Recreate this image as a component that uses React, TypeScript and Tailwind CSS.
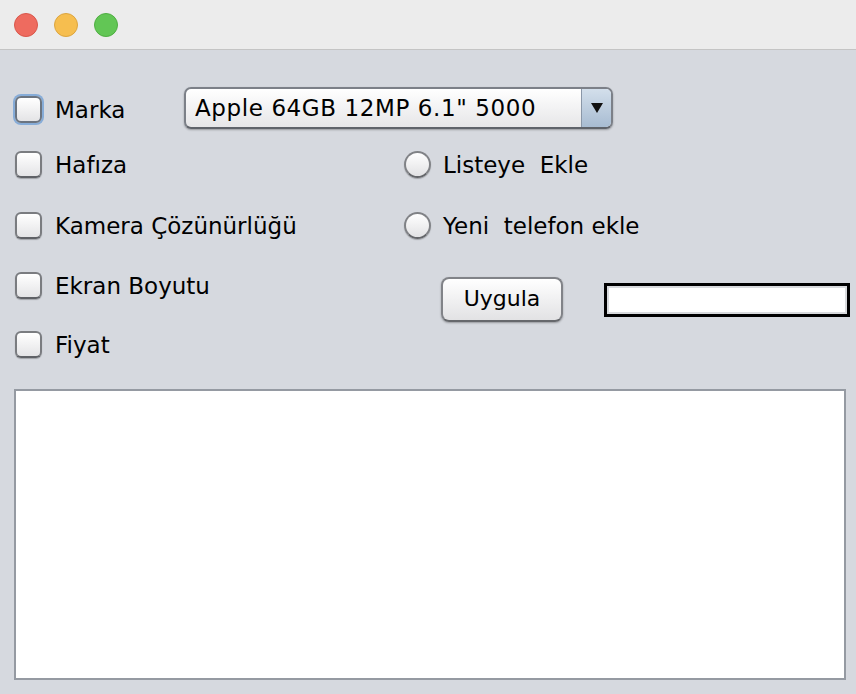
import React from "react";

const font = { fontFamily: '"DejaVu Sans", "Liberation Sans", sans-serif' };

function Check({ focused = false }: { focused?: boolean }) {
  return (
    <div className="w-[28px] h-[28px] flex items-center justify-center shrink-0">
      <div
        className={
          "w-[27px] h-[27px] rounded-[6px] bg-gradient-to-b from-white to-[#e4e4e6] border-2 " +
          (focused
            ? "border-[#6b7480] shadow-[0_0_0_2px_#86acd8]"
            : "border-[#7a7c80] border-b-[#5f6166] shadow-[0_1px_1px_rgba(0,0,0,0.25)]")
        }
      />
    </div>
  );
}

function Radio() {
  return (
    <div className="w-[28px] h-[28px] flex items-center justify-center shrink-0">
      <div className="w-[27px] h-[27px] rounded-full border-2 border-[#808286] border-b-[#64666a] bg-gradient-to-b from-white to-[#e2e2e4] shadow-[0_1px_1px_rgba(0,0,0,0.25)]" />
    </div>
  );
}

export default function App() {
  return (
    <div className="w-[856px] h-[694px] bg-[#d6d9df] text-black overflow-hidden" style={font}>
      <div className="h-[50px] bg-[#ececec] border-b border-[#c4c4c4] flex items-center pl-[14px] gap-[16px]">
        <div className="w-[24px] h-[24px] rounded-full bg-[#ee6b5f] border border-[#d9574b]" />
        <div className="w-[24px] h-[24px] rounded-full bg-[#f6be4f] border border-[#dca53f]" />
        <div className="w-[24px] h-[24px] rounded-full bg-[#62c655] border border-[#4fae42]" />
      </div>

      <div className="px-[14px] pt-[37px] text-[23px] leading-none">
        {/* Row 1 */}
        <div className="flex items-center h-[42px]">
          <div className="flex items-center w-[170px] shrink-0 pt-[2px]">
            <Check focused />
            <span className="ml-[13px] pt-[2px]">Marka</span>
          </div>
          <div className="w-[429px] shrink-0 h-[42px] rounded-[7px] border-2 border-[#7c8088] border-b-[#5f636a] bg-gradient-to-b from-white to-[#e6e6e8] shadow-[0_1px_2px_rgba(0,0,0,0.3)] flex overflow-hidden">
            <div className="flex-1 flex items-center pl-[9px] pt-[1px] tracking-[0.6px]">Apple 64GB 12MP 6.1&quot; 5000</div>
            <div className="w-[30px] border-l border-[#8a97a8] bg-gradient-to-b from-[#d3dfeb] to-[#a8bcd2] flex items-center justify-center">
              <svg width="12" height="10" viewBox="0 0 12 10">
                <path d="M0 0 H12 L6 10 Z" fill="#111" />
              </svg>
            </div>
          </div>
        </div>

        {/* Row 2 */}
        <div className="flex items-center h-[28px] mt-[21px]">
          <div className="flex items-center w-[389px] shrink-0">
            <Check />
            <span className="ml-[13px] pt-[2px]">Hafıza</span>
          </div>
          <Radio />
          <span className="ml-[12px] pt-[2px] whitespace-pre">Listeye  Ekle</span>
        </div>

        {/* Row 3 */}
        <div className="flex items-center h-[28px] mt-[33px]">
          <div className="flex items-center w-[389px] shrink-0">
            <Check />
            <span className="ml-[13px] pt-[2px]">Kamera Çözünürlüğü</span>
          </div>
          <Radio />
          <span className="ml-[12px] pt-[2px] whitespace-pre">Yeni  telefon ekle</span>
        </div>

        {/* Row 4 */}
        <div className="flex items-start h-[28px] mt-[32px]">
          <div className="flex items-center w-[427px] h-[28px] shrink-0">
            <Check />
            <span className="ml-[13px] pt-[2px]">Ekran Boyutu</span>
          </div>
          <div className="shrink-0 mt-[6px] w-[122px] h-[45px] rounded-[8px] border-2 border-[#818388] border-b-[#66686c] bg-gradient-to-b from-white to-[#e2e2e4] shadow-[0_1px_2px_rgba(0,0,0,0.3)] flex items-center justify-center text-[22px] pb-[1px]">
            Uygula
          </div>
          <div className="shrink-0 ml-[41px] mt-[12px] w-[246px] h-[34px] bg-white border-[3px] border-black shadow-[inset_0_0_0_2px_#d8dadd]" />
        </div>

        {/* Row 5 */}
        <div className="flex items-center h-[28px] mt-[31px]">
          <Check />
          <span className="ml-[13px] pt-[2px]">Fiyat</span>
        </div>

        <div className="mt-[31px] w-[832px] h-[291px] bg-white border-2 border-[#959aa2]" />
      </div>
    </div>
  );
}
